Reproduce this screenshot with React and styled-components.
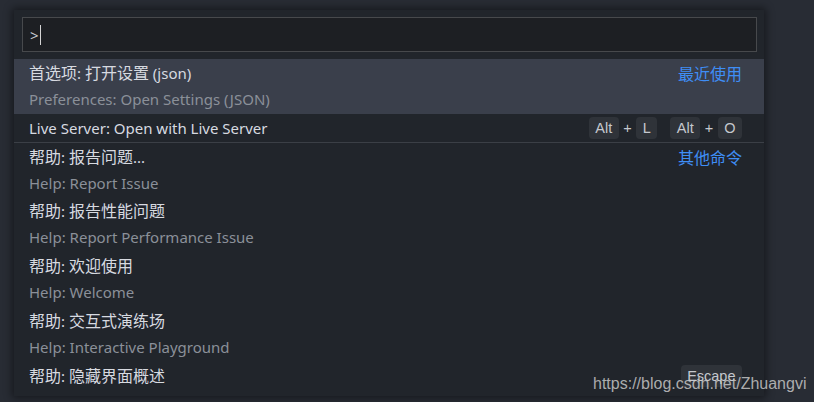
import React from "react";
import styled, { createGlobalStyle } from "styled-components";

const Global = createGlobalStyle`
  html, body { margin: 0; padding: 0; background: #282c34; }
  body { width: 814px; height: 402px; overflow: hidden; }
`;

const FONT = `"Noto Sans", "Noto Sans CJK SC", sans-serif`;

const Page = styled.div`
  position: relative;
  width: 814px;
  height: 402px;
  padding: 10px 0 0 14px;
  box-sizing: border-box;
  font-family: ${FONT};
`;

const Panel = styled.div`
  width: 750px;
  height: 386px;
  background: #21252b;
  box-shadow: 0 0 8px 2px rgba(0, 0, 0, 0.45);
  overflow: hidden;
  display: flex;
  flex-direction: column;
`;

const InputBar = styled.div`
  padding: 7px 7px 7px 8px;
`;

const InputBox = styled.div`
  height: 35px;
  box-sizing: border-box;
  border: 1px solid #47494c;
  background: #1d1f23;
  display: flex;
  align-items: center;
  padding-left: 7px;
  color: #c8ccd2;
  font-size: 15px;
`;

const Caret = styled.span`
  display: inline-block;
  width: 1px;
  height: 20px;
  margin-left: 1px;
  background: #d4d4d4;
`;

const List = styled.div`
  display: flex;
  flex-direction: column;
`;

const Row = styled.div`
  display: flex;
  align-items: ${(p) => (p.$single ? "center" : "flex-start")};
  justify-content: space-between;
  box-sizing: border-box;
  height: ${(p) => (p.$single ? "28px" : "55px")};
  padding: 0 22px 0 15px;
  background: ${(p) => (p.$selected ? "#3a3f4b" : "transparent")};
  border-top: ${(p) => (p.$separator ? "1px solid #3b3f46" : "none")};
  flex-shrink: 0;
`;

const Labels = styled.div`
  display: flex;
  flex-direction: column;
  padding-top: 1px;
`;

const Title = styled.div`
  font-size: 15px;
  height: ${(p) => (p.$single ? "28px" : "26px")};
  line-height: ${(p) => (p.$single ? "28px" : "26px")};
  color: #d7dae0;
  white-space: nowrap;
`;

const Han = styled.span`
  font-family: "Noto Sans CJK SC", sans-serif;
  font-size: 16px;
  line-height: 1;
`;

const Detail = styled.div`
  font-size: 15px;
  height: 26px;
  line-height: 26px;
  color: #8b9099;
  white-space: nowrap;
`;

const Group = styled.div`
  font-family: "Noto Sans CJK SC", sans-serif;
  font-size: 16px;
  line-height: 26px;
  padding-top: 1px;
  color: #3f8ef6;
`;

const Keys = styled.div`
  display: flex;
  align-items: center;
  gap: 13px;
  padding-top: ${(p) => (p.$top ? "3px" : "0")};
`;

const Chord = styled.div`
  display: flex;
  align-items: center;
`;

const Kbd = styled.span`
  display: inline-flex;
  align-items: center;
  justify-content: center;
  box-sizing: border-box;
  height: 22px;
  min-width: 21px;
  padding: 0 6.5px;
  border-radius: 4px;
  background: #2f3339;
  color: #c5c8ce;
  font-family: "Liberation Sans", Arial, sans-serif;
  font-size: 14.5px;
`;

const Plus = styled.span`
  color: #c5c8ce;
  font-family: "Liberation Sans", Arial, sans-serif;
  font-size: 14.5px;
  padding: 0 4.5px;
`;

const Watermark = styled.div`
  position: absolute;
  left: 593px;
  top: 375px;
  font-family: "Liberation Sans", Arial, sans-serif;
  font-size: 16px;
  line-height: normal;
  color: rgba(205, 205, 205, 0.82);
  white-space: nowrap;
`;

function Mixed({ text }) {
  const parts = text.split(/([\u3000-\u9fff]+)/);
  return parts.map((p, i) =>
    /[\u3000-\u9fff]/.test(p) ? <Han key={i}>{p}</Han> : <React.Fragment key={i}>{p}</React.Fragment>
  );
}

const items = [
  { title: "帮助: 报告问题...", detail: "Help: Report Issue", group: "其他命令", sep: true },
  { title: "帮助: 报告性能问题", detail: "Help: Report Performance Issue" },
  { title: "帮助: 欢迎使用", detail: "Help: Welcome" },
  { title: "帮助: 交互式演练场", detail: "Help: Interactive Playground" },
  { title: "帮助: 隐藏界面概述", keys: [["Escape"]] },
];

function KeyCombo({ chords, top }) {
  return (
    <Keys $top={top}>
      {chords.map((chord, i) => (
        <Chord key={i}>
          {chord.map((k, j) => (
            <React.Fragment key={j}>
              {j > 0 && <Plus>+</Plus>}
              <Kbd>{k}</Kbd>
            </React.Fragment>
          ))}
        </Chord>
      ))}
    </Keys>
  );
}

export default function App() {
  return (
    <>
      <Global />
      <Page>
        <Panel>
          <InputBar>
            <InputBox>
              &gt;<Caret />
            </InputBox>
          </InputBar>
          <List>
            <Row $selected>
              <Labels>
                <Title><Mixed text="首选项: 打开设置 (json)" /></Title>
                <Detail>Preferences: Open Settings (JSON)</Detail>
              </Labels>
              <Group>最近使用</Group>
            </Row>
            <Row $single>
              <Title $single>Live Server: Open with Live Server</Title>
              <KeyCombo chords={[["Alt", "L"], ["Alt", "O"]]} />
            </Row>
            {items.map((it, i) => (
              <Row key={i} $separator={it.sep}>
                <Labels>
                  <Title><Mixed text={it.title} /></Title>
                  {it.detail && <Detail>{it.detail}</Detail>}
                </Labels>
                {it.group && <Group>{it.group}</Group>}
                {it.keys && <KeyCombo chords={it.keys} top />}
              </Row>
            ))}
          </List>
        </Panel>
        <Watermark>https://blog.csdn.net/Zhuangvi</Watermark>
      </Page>
    </>
  );
}
